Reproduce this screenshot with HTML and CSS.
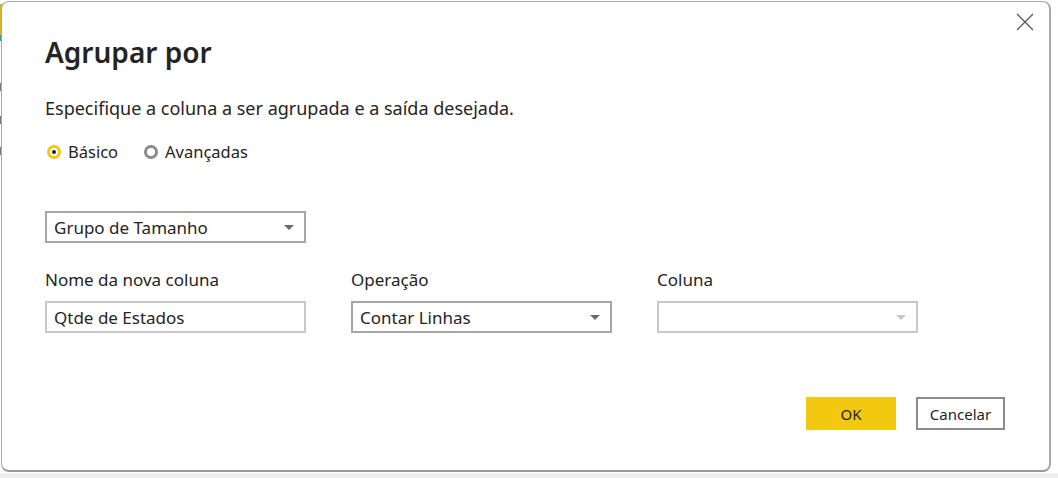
FILE: index.html
```html
<!DOCTYPE html>
<html lang="pt">
<head>
<meta charset="utf-8">
<link rel="stylesheet" href="styles.css">
</head>
<body>
<div class="backdrop">
  <div class="behind">
    <div class="behind-bar"></div>
    <div class="behind-teal"></div>
    <div class="behind-line l1"></div>
    <div class="behind-line l2"></div>
    <div class="behind-line l3"></div>
  </div>
  <div class="dialog">
    <button class="close" aria-label="Fechar">
      <svg width="18" height="18" viewBox="0 0 18 18"><path d="M1 1 L17 17 M17 1 L1 17" stroke="#555" stroke-width="1.2" fill="none"/></svg>
    </button>
    <h1 class="title">Agrupar por</h1>
    <p class="subtitle">Especifique a coluna a ser agrupada e a saída desejada.</p>
    <div class="radios">
      <label class="radio"><span class="dot checked"></span>Básico</label>
      <label class="radio"><span class="dot"></span>Avançadas</label>
    </div>
    <div class="select group">
      <span>Grupo de Tamanho</span><span class="arrow"></span>
    </div>
    <div class="fields">
      <div class="field">
        <div class="label">Nome da nova coluna</div>
        <div class="input">Qtde de Estados</div>
      </div>
      <div class="field">
        <div class="label">Operação</div>
        <div class="select"><span>Contar Linhas</span><span class="arrow"></span></div>
      </div>
      <div class="field">
        <div class="label">Coluna</div>
        <div class="select disabled"><span></span><span class="arrow"></span></div>
      </div>
    </div>
    <div class="actions">
      <button class="btn primary">OK</button>
      <button class="btn secondary">Cancelar</button>
    </div>
  </div>
</div>
</body>
</html>
```
FILE: styles.css
```css
* { box-sizing: border-box; }
html, body { margin: 0; padding: 0; }
body {
  width: 1058px;
  height: 478px;
  background: #f3f3f3;
  font-family: "Noto Sans", "Open Sans", sans-serif;
  color: #252423;
  overflow: hidden;
}
.backdrop {
  position: relative;
  width: 1058px;
  height: 478px;
  background: linear-gradient(#ffffff, #ffffff) no-repeat 0 0 / 1058px 473px, #eeeeee;
}
.behind {
  position: absolute;
  left: 0; top: 0;
  width: 10px; height: 200px;
}
.behind-bar { position: absolute; left: 0; top: 4px; width: 4px; height: 31px; background: #d6b32a; }
.behind-teal { position: absolute; left: 0; top: 35px; width: 4px; height: 6px; background: #2d9c96; }
.behind-line { position: absolute; left: 0; width: 2px; height: 8px; background: #777; }
.l1 { top: 83px; } .l2 { top: 116px; } .l3 { top: 147px; }
.dialog {
  position: absolute;
  left: 1px; top: 1px;
  width: 1050px;
  height: 471px;
  background: #fff;
  border: 1px solid #a8a8a8;
  border-bottom: 2px solid #9a9a9a;
  border-right: 2px solid #a8a8a8;
  border-radius: 8px;
  padding: 29px 44px 0 43px;
}
.close {
  position: absolute;
  right: 15px; top: 11px;
  background: none; border: none; padding: 0;
  width: 18px; height: 18px;
}
.close svg { display: block; }
.title {
  margin: 0;
  font-size: 28px;
  font-weight: 600;
  line-height: 42px;
}
.subtitle {
  margin: 23px 0 0 0;
  font-size: 18px;
  line-height: 24px;
}
.radios {
  display: flex;
  gap: 24px;
  margin-top: 21px;
  font-size: 16.5px;
  line-height: 22px;
}
.radio { display: flex; align-items: center; gap: 7px; }
.dot {
  width: 14px; height: 14px;
  border-radius: 50%;
  border: 3px solid #8a8a8a;
  position: relative;
  margin-left: 2px;
}
.dot.checked { border-color: #f2c811; }
.dot.checked::after {
  content: "";
  position: absolute;
  left: 2px; top: 2px;
  width: 4px; height: 4px;
  border-radius: 50%;
  background: #252423;
}
.select, .input {
  height: 32px;
  width: 261px;
  border: 2px solid #a6a6a6;
  display: flex;
  align-items: center;
  justify-content: space-between;
  padding: 0 10px 0 7px;
  font-size: 17px;
}
.input { border-color: #c8c8c8; }
.select.disabled { border-color: #c8c8c8; }
.arrow {
  width: 0; height: 0;
  border-left: 5px solid transparent;
  border-right: 5px solid transparent;
  border-top: 5px solid #6a6a6a;
}
.disabled .arrow { border-top-color: #c8c8c8; }
.select.group { margin-top: 48px; }
.fields {
  display: flex;
  gap: 45px;
  margin-top: 26px;
}
.field { width: 261px; }
.label {
  font-size: 17px;
  line-height: 22px;
  margin-bottom: 10px;
}
.actions {
  display: flex;
  justify-content: flex-end;
  gap: 20px;
  margin-top: 64px;
}
.btn {
  height: 33px;
  width: 90px;
  font-family: "Noto Sans", "Open Sans", sans-serif;
  font-size: 15px;
  color: #252423;
  padding: 0;
}
.primary { background: #f2c811; border: none; }
.secondary { background: #fff; border: 2px solid #8a8a8a; width: 89px; }
```
